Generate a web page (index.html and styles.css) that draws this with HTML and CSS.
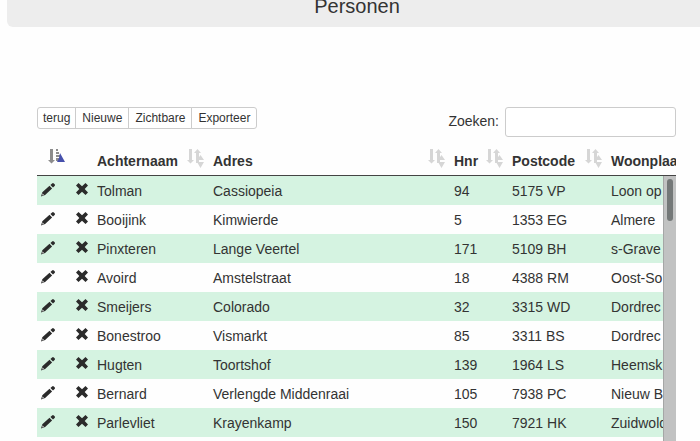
FILE: index.html
```html
<!DOCTYPE html>
<html lang="nl">
<head>
<meta charset="utf-8">
<title>Personen</title>
<link rel="stylesheet" href="styles.css">
</head>
<body>
<svg class="defs" aria-hidden="true">
  <symbol id="pencil" viewBox="0 0 16 15">
    <path d="M1 14.500l1.300-4.200 7.200-6.500 2.600 2.700-7 6.600zM10.400 3l1.700-1.600q.9-.9 1.700 0l.9.900q.7.900-.1 1.700l-1.600 1.600z"/>
    <path class="tip" d="M2.400 11.200l1.700 1.700-1.700.6z"/>
  </symbol>
  <symbol id="cross" viewBox="0 0 12 12">
    <path d="M2.500 0L6 3.300 9.500 0 12 2.500 8.700 6 12 9.500 9.500 12 6 8.700 2.500 12 0 9.500 3.300 6 0 2.500z"/>
  </symbol>
  <symbol id="both" viewBox="0 0 17 20">
    <path d="M2 0h3v11h2l-3.500 3.500L0 11h2z"/>
    <path d="M9 14V4H7l3.500-4L14 4h-2v10z"/>
    <path d="M13.500 6l3.500 5h-7zM10 13h7l-3.500 6z"/>
  </symbol>
  <symbol id="asc" viewBox="0 0 17 20">
    <path d="M2 0h3v11h2l-3.500 3.500L0 11h2z"/>
    <path d="M8 0h2v2H8zM8 3h3v2H8zM8 6h4v2H8zM8 9h5v3H8z"/>
    <path class="blue" d="M12 4l5 9H9l2-4z"/>
  </symbol>
</svg>
<header class="banner"><h1>Personen</h1></header>
<main class="content">
  <div class="toolbar">
    <div class="buttons">
      <button type="button">terug</button>
      <button type="button">Nieuwe</button>
      <button type="button">Zichtbare</button>
      <button type="button">Exporteer</button>
    </div>
    <div class="search">
      <label for="zoeken">Zoeken:</label>
      <input id="zoeken" type="text">
    </div>
  </div>
  <div class="grid">
    <table>
      <colgroup><col class="actions"><col class="name"><col class="address"><col class="number"><col class="postcode"><col class="city"></colgroup>
      <thead>
        <tr>
          <th class="sorted"><svg class="sort"><use href="#asc"/></svg></th>
          <th><span class="head">Achternaam<svg class="sort"><use href="#both"/></svg></span></th>
          <th><span class="head">Adres<svg class="sort"><use href="#both"/></svg></span></th>
          <th><span class="head">Hnr<svg class="sort"><use href="#both"/></svg></span></th>
          <th><span class="head">Postcode<svg class="sort"><use href="#both"/></svg></span></th>
          <th><span class="head">Woonplaats</span></th>
        </tr>
      </thead>
      <tbody>
        <tr><td><span class="icons"><svg class="pencil"><use href="#pencil"/></svg><svg class="cross"><use href="#cross"/></svg></span></td><td>Tolman</td><td>Cassiopeia</td><td>94</td><td>5175 VP</td><td>Loon op</td></tr>
        <tr><td><span class="icons"><svg class="pencil"><use href="#pencil"/></svg><svg class="cross"><use href="#cross"/></svg></span></td><td>Booijink</td><td>Kimwierde</td><td>5</td><td>1353 EG</td><td>Almere</td></tr>
        <tr><td><span class="icons"><svg class="pencil"><use href="#pencil"/></svg><svg class="cross"><use href="#cross"/></svg></span></td><td>Pinxteren</td><td>Lange Veertel</td><td>171</td><td>5109 BH</td><td>s-Grave</td></tr>
        <tr><td><span class="icons"><svg class="pencil"><use href="#pencil"/></svg><svg class="cross"><use href="#cross"/></svg></span></td><td>Avoird</td><td>Amstelstraat</td><td>18</td><td>4388 RM</td><td>Oost-So</td></tr>
        <tr><td><span class="icons"><svg class="pencil"><use href="#pencil"/></svg><svg class="cross"><use href="#cross"/></svg></span></td><td>Smeijers</td><td>Colorado</td><td>32</td><td>3315 WD</td><td>Dordrec</td></tr>
        <tr><td><span class="icons"><svg class="pencil"><use href="#pencil"/></svg><svg class="cross"><use href="#cross"/></svg></span></td><td>Bonestroo</td><td>Vismarkt</td><td>85</td><td>3311 BS</td><td>Dordrec</td></tr>
        <tr><td><span class="icons"><svg class="pencil"><use href="#pencil"/></svg><svg class="cross"><use href="#cross"/></svg></span></td><td>Hugten</td><td>Toortshof</td><td>139</td><td>1964 LS</td><td>Heemsk</td></tr>
        <tr><td><span class="icons"><svg class="pencil"><use href="#pencil"/></svg><svg class="cross"><use href="#cross"/></svg></span></td><td>Bernard</td><td>Verlengde Middenraai</td><td>105</td><td>7938 PC</td><td>Nieuw B</td></tr>
        <tr><td><span class="icons"><svg class="pencil"><use href="#pencil"/></svg><svg class="cross"><use href="#cross"/></svg></span></td><td>Parlevliet</td><td>Krayenkamp</td><td>150</td><td>7921 HK</td><td>Zuidwold</td></tr>
      </tbody>
    </table>
    <div class="scrollbar"><div class="thumb"></div></div>
  </div>
</main>
</body>
</html>
```
FILE: styles.css
```css
* { box-sizing: border-box; }

body {
  margin: 0;
  height: 100vh;
  overflow: hidden;
  display: flex;
  flex-direction: column;
  background: #fefefe;
  color: #333;
  font: 14px/20px "Liberation Sans", Arial, sans-serif;
}

.defs { position: absolute; width: 0; height: 0; }

.banner {
  flex: none;
  margin: -20px -7px 0 7px;
  padding: 14px 0 9px;
  border-radius: 6px;
  background: #ededed;
}

h1 {
  margin: 0;
  font-size: 20px;
  font-weight: 400;
  line-height: 24px;
  text-align: center;
}

.content {
  flex: 1;
  min-height: 0;
  display: flex;
  flex-direction: column;
  margin: 80px 24px 0 37px;
}

.toolbar {
  display: flex;
  justify-content: space-between;
  align-items: flex-start;
}

.buttons { display: flex; }

button {
  height: 22px;
  margin: 0 0 0 -1px;
  padding: 0 6px;
  border: 1px solid #ccc;
  background: #fff;
  color: #333;
  font: 12px/18px "Liberation Sans", Arial, sans-serif;
}

button:first-child { margin-left: 0; padding: 0 5px; border-radius: 3px 0 0 3px; }
button:last-child { border-radius: 0 3px 3px 0; }

.search { display: flex; align-items: center; gap: 6px; }
.search label { margin-top: -2px; }

input {
  width: 171px;
  height: 30px;
  padding: 5px 10px;
  border: 1px solid #ccc;
  border-radius: 3px;
  background: #fff;
  font: inherit;
}

.grid {
  position: relative;
  flex: 1;
  min-height: 0;
  margin-top: 7px;
  overflow: hidden;
}

table {
  width: 100%;
  table-layout: fixed;
  border-collapse: separate;
  border-spacing: 0;
  white-space: nowrap;
}

.actions { width: 52px; }
.name { width: 116px; }
.address { width: auto; }
.number { width: 58px; }
.postcode { width: 99px; }
.city { width: 73px; }

th {
  height: 32px;
  padding: 3px 0 0 8px;
  border-bottom: 1px solid #444;
  text-align: left;
  vertical-align: middle;
}

th.sorted { padding: 0 0 0 11px; }
.head { display: flex; justify-content: space-between; }

.sort {
  display: block;
  flex: none;
  width: 17px;
  height: 20px;
  margin: -2px 1px 0 0;
  fill: #d6d6d6;
}

.sorted .sort { fill: #8c8c8c; }
.blue { fill: #4650ac; }

td { height: 29px; padding: 0 0 0 8px; overflow: hidden; }
td:first-child { padding: 0 1px 0 3px; }
tbody tr:nth-child(odd) { background: #d5f3e1; }

.icons {
  display: flex;
  justify-content: space-between;
  align-items: center;
  margin-top: -3px;
}

.icons svg { fill: #2b2b2b; }
.pencil { width: 16px; height: 15px; }
.cross { width: 12px; height: 12px; }
.tip { fill: #ddd; }

.scrollbar {
  position: absolute;
  top: 32px;
  right: 0;
  bottom: 0;
  width: 13px;
  padding: 3px 3px 0;
  border-left: 1px solid #a5a6a6;
  background: #c1c2c2;
}

.thumb { height: 42px; border-radius: 3px; background: #747878; }
```
